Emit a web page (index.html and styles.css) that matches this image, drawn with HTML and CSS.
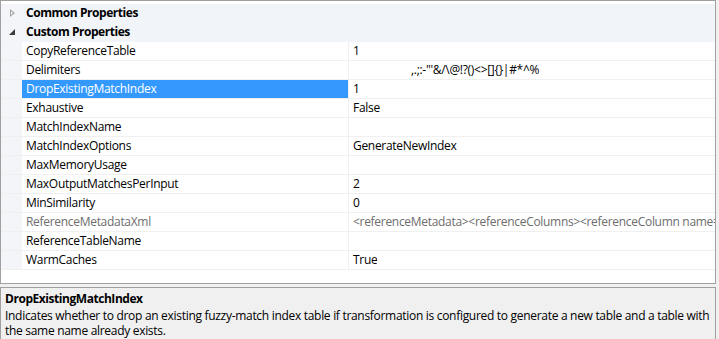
FILE: index.html
```html
<!DOCTYPE html>
<html lang="en">
  <head>
    <meta charset="UTF-8" />
    <title>Properties</title>
    <link rel="stylesheet" href="styles.css">
  </head>
  <body>
    <div class="grid">
      <div class="row category">
        <span class="gutter"><span class="arrow-closed"></span></span>
        <span class="cat-name">Common Properties</span>
      </div>
      <div class="row category">
        <span class="gutter"><span class="arrow-open"></span></span>
        <span class="cat-name">Custom Properties</span>
      </div>
      <div class="row"><span class="gutter"></span><span class="name">CopyReferenceTable</span><span class="value">1</span></div>
      <div class="row"><span class="gutter"></span><span class="name">Delimiters</span><span class="value delims">,.;:-"'&amp;/\@!?()&lt;&gt;[]{}|#*^%</span></div>
      <div class="row selected"><span class="gutter"></span><span class="name">DropExistingMatchIndex</span><span class="value">1</span></div>
      <div class="row"><span class="gutter"></span><span class="name">Exhaustive</span><span class="value">False</span></div>
      <div class="row"><span class="gutter"></span><span class="name">MatchIndexName</span><span class="value"></span></div>
      <div class="row"><span class="gutter"></span><span class="name">MatchIndexOptions</span><span class="value">GenerateNewIndex</span></div>
      <div class="row"><span class="gutter"></span><span class="name">MaxMemoryUsage</span><span class="value"></span></div>
      <div class="row"><span class="gutter"></span><span class="name">MaxOutputMatchesPerInput</span><span class="value">2</span></div>
      <div class="row"><span class="gutter"></span><span class="name">MinSimilarity</span><span class="value">0</span></div>
      <div class="row readonly"><span class="gutter"></span><span class="name">ReferenceMetadataXml</span><span class="value">&lt;referenceMetadata&gt;&lt;referenceColumns&gt;&lt;referenceColumn name=</span></div>
      <div class="row"><span class="gutter"></span><span class="name">ReferenceTableName</span><span class="value"></span></div>
      <div class="row"><span class="gutter"></span><span class="name">WarmCaches</span><span class="value">True</span></div>
    </div>
    <div class="help">
      <div class="help-title">DropExistingMatchIndex</div>
      <div class="help-text">Indicates whether to drop an existing fuzzy-match index table if transformation is configured to generate a new table and a table with the same name already exists.</div>
    </div>
  </body>
</html>
```

FILE: styles.css
```css
body {
  margin: 0;
  width: 719px;
  height: 339px;
  background: #f0f0f0;
  font-family: "Open Sans", "Noto Sans", sans-serif;
  font-size: 12px;
  letter-spacing: -0.3px;
  color: #000;
  overflow: hidden;
}
.grid {
  width: 716px;
  height: 284px;
  border: 1px solid #a0a0a0;
  background: #fff;
  padding-top: 3px;
  box-sizing: border-box;
}
.row {
  display: flex;
  height: 19px;
  line-height: 18px;
  border-bottom: 1px solid #f0f0f0;
  box-sizing: border-box;
  white-space: nowrap;
}
.gutter {
  width: 21px;
  flex: none;
  background: #f3f5f9;
  position: relative;
}
.category {
  background: #f1f4f9;
  border-bottom-color: #f1f4f9;
}
.cat-name {
  font-weight: bold;
  letter-spacing: -0.45px;
  padding-left: 4px;
}
.name {
  width: 327px;
  flex: none;
  padding-left: 4px;
  box-sizing: border-box;
  border-right: 1px solid #f0f0f0;
  overflow: hidden;
}
.value {
  padding-left: 4px;
  overflow: hidden;
}
.delims {
  padding-left: 62px;
}
.selected .name {
  background: #3399ff;
  color: #fff;
}
.readonly .name,
.readonly .value {
  color: #6d6d6d;
}
.arrow-closed {
  position: absolute;
  left: 9px;
  top: 5px;
  width: 0;
  height: 0;
  border-top: 4px solid transparent;
  border-bottom: 4px solid transparent;
  border-left: 5px solid #a6a6a6;
}
.arrow-closed::after {
  content: "";
  position: absolute;
  left: -4px;
  top: -2px;
  border-top: 2px solid transparent;
  border-bottom: 2px solid transparent;
  border-left: 2px solid #f1f4f9;
}
.arrow-open {
  position: absolute;
  left: 8px;
  top: 6px;
  width: 0;
  height: 0;
  border-left: 6px solid transparent;
  border-bottom: 6px solid #3c3c3c;
}
.help {
  margin-top: 3px;
  height: 52px;
  border: 1px solid #a0a0a0;
  border-bottom: none;
  width: 716px;
  box-sizing: border-box;
  padding: 3px 4px 0 4px;
  line-height: 15px;
}
.help-title {
  font-weight: bold;
  letter-spacing: -0.45px;
  margin-bottom: 2px;
}
```
